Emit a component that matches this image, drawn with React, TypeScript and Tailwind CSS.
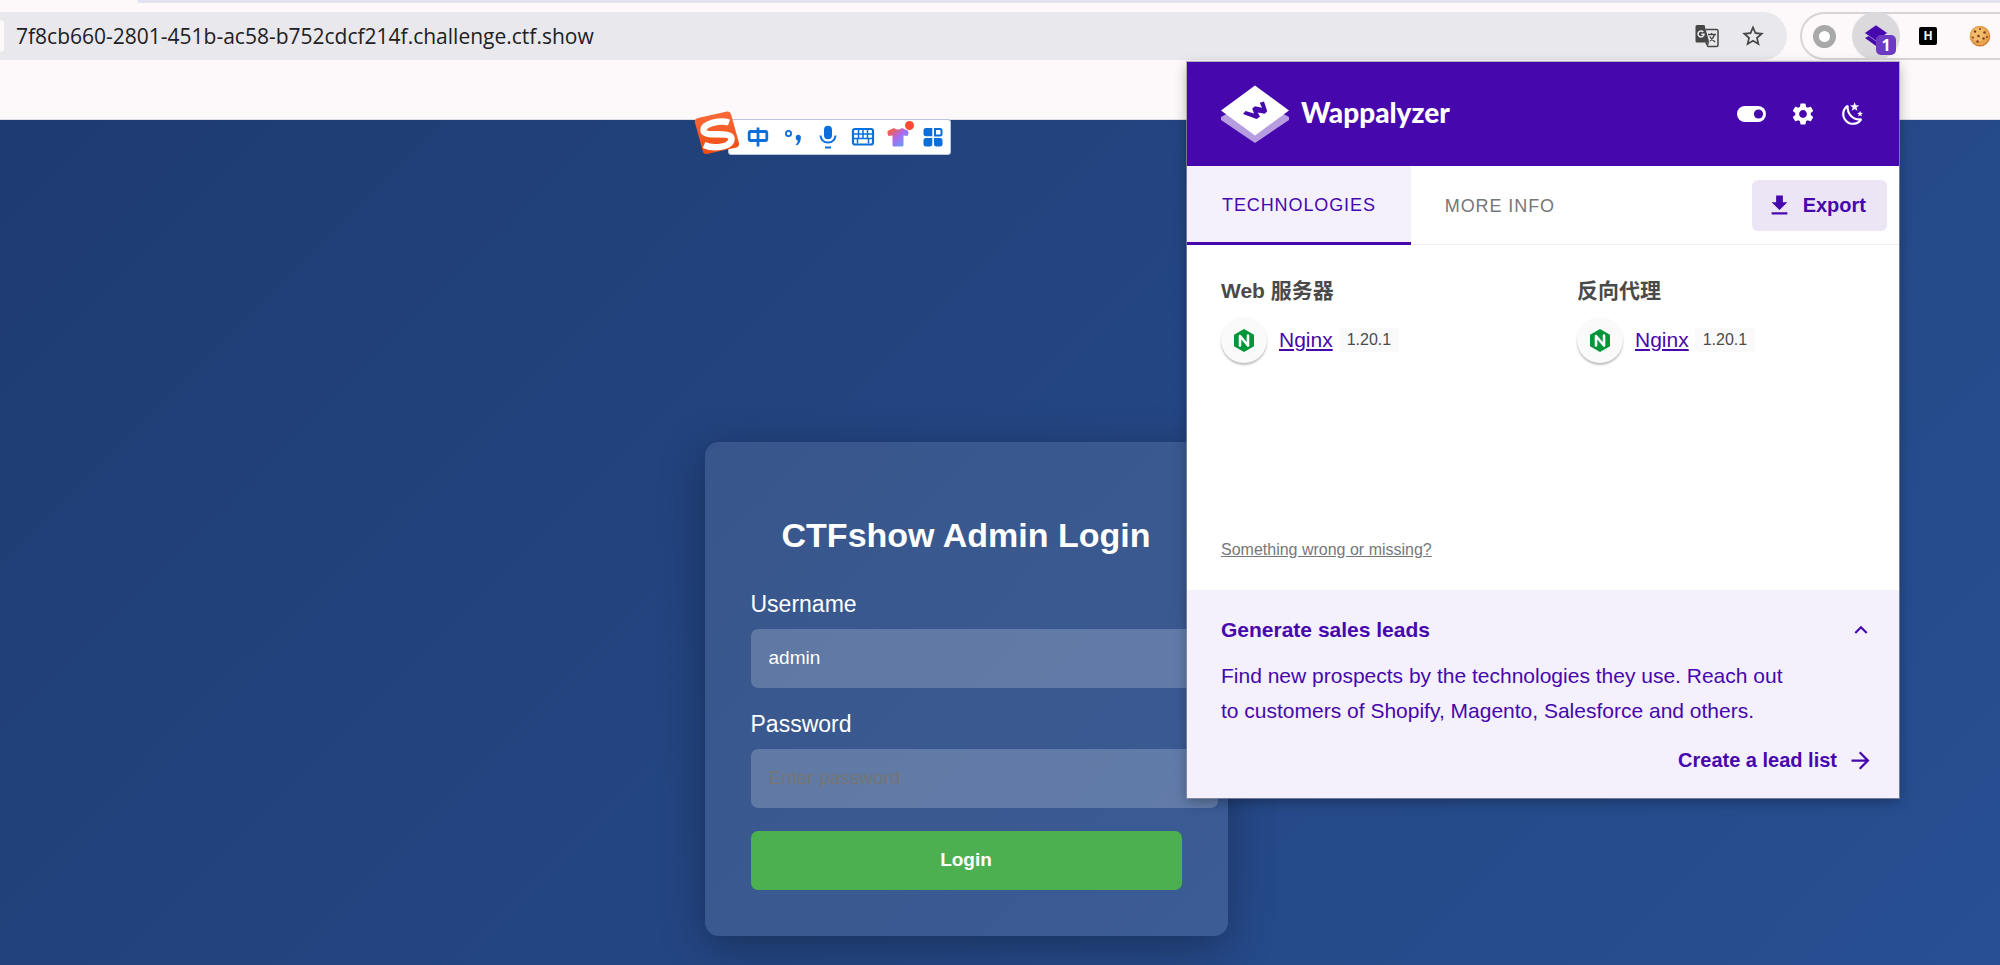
import React from "react";
import { MdArrowForward, MdDownload, MdKeyboardArrowUp, MdSettings, MdStarBorder } from "react-icons/md";

function TranslateIcon() {
  return (
    <svg viewBox="0 0 24 24" className="size-6" fill="none">
      <path d="M11 5.500h10.500a1.500 1.500 0 0 1 1.500 1.500v14a1.500 1.500 0 0 1-1.500 1.500H13l-2-4" stroke="#474747" strokeWidth="1.500" />
      <path d="M2 1h7.500l4.800 17.500H2A1.500 1.500 0 0 1 .5 17V2.500A1.500 1.500 0 0 1 2 1z" fill="#474747" />
      <path d="M8.300 8A3 3 0 1 0 9 10.200H6.300" stroke="#e9e8ed" strokeWidth="1.500" />
      <path d="M13 10.500h8M16.500 9v1.500M19.500 10.500c-.6 3-2.500 5-4.500 6.500M14.800 12.500c1 2 3 4 5.400 5.500" stroke="#474747" strokeWidth="1.300" />
      <path d="M10 18.500h4.300L12.500 22z" fill="#474747" />
    </svg>
  );
}

function Cookie() {
  return (
    <svg viewBox="0 0 24 24" className="size-6">
      <circle cx="12" cy="12.200" r="10.200" fill="#c97a30" />
      <circle cx="11.600" cy="11.600" r="9.600" fill="#e9a24d" />
      <circle cx="10.500" cy="10.500" r="7" fill="#f3bb6c" />
      <g fill="#7b3f1c">
        <circle cx="7" cy="7.500" r="1.200" />
        <circle cx="12" cy="5" r="1" />
        <circle cx="16.500" cy="8.500" r="1.300" />
        <circle cx="10.500" cy="12" r="1.300" />
        <circle cx="5" cy="13.500" r="1" />
        <circle cx="15.500" cy="14.500" r="1.200" />
        <circle cx="9.500" cy="17.500" r="1.200" />
        <circle cx="19" cy="13" r=".9" />
      </g>
    </svg>
  );
}

function BrowserBar() {
  return (
    <header className="h-[120px] border-b border-[#dcdce4] bg-[#fdf8f9]">
      <div className="ml-[137px] h-[3px] rounded-bl-lg bg-[#e4e2f0]" />
      <div className="flex items-center gap-[13px] pt-[9px]">
        <div className="flex h-12 min-w-0 flex-1 items-center rounded-r-full bg-[#e9e8ed] pr-[21px]">
          <span className="h-8 w-1 rounded-r-full bg-[#fdf8f9]" />
          <input
            aria-label="Address"
            readOnly
            value="7f8cb660-2801-451b-ac58-b752cdcf214f.challenge.ctf.show"
            className="h-12 min-w-0 flex-1 bg-transparent pb-px pl-3 font-['Open_Sans',sans-serif] text-[21px] text-[#202124] outline-none"
          />
          <div className="flex items-center gap-[21px] text-[#474747]">
            <button aria-label="Translate">
              <TranslateIcon />
            </button>
            <button aria-label="Bookmark">
              <MdStarBorder className="size-[26px]" />
            </button>
          </div>
        </div>
        <div className="flex h-12 w-[200px] items-center rounded-l-full border-2 border-r-0 border-[#d6d4d8] pl-[11px]">
          <button
            aria-label="Recorder"
            className="mr-4 size-[23px] rounded-full border-[6px] border-[#a9a9a9] bg-white"
          />
          <button
            aria-label="Wappalyzer"
            className="relative flex size-12 items-center justify-center rounded-full bg-[#dbd9dc]"
          >
            <svg viewBox="0 0 24 24" className="size-6" fill="#4608ad">
              <path d="M12 8 23 14 12 22 1 14z" />
              <path d="M12 1 23.500 9 12 17 .5 9z" stroke="#dbd9dc" strokeWidth=".6" />
            </svg>
            <span className="absolute top-[23px] left-6 flex size-5 items-center justify-center rounded-[5px] bg-[#6c3bc1] font-['Open_Sans',sans-serif] text-base font-bold text-white">
              1
            </span>
          </button>
          <button
            aria-label="H extension"
            className="ml-[19px] flex size-[18px] items-center justify-center rounded-[2px] bg-black text-xs font-bold text-white"
          >
            H
          </button>
          <button aria-label="Cookies" className="ml-[31px]">
            <Cookie />
          </button>
        </div>
      </div>
    </header>
  );
}

function InputMethodBar() {
  return (
    <div className="absolute top-[111px] left-[694px] flex items-start">
      <svg viewBox="0 0 46 46" className="z-10 size-[46px]">
        <defs>
          <linearGradient id="sogou" x1="0" y1="0" x2="0" y2="1">
            <stop offset="0" stopColor="#fb6a3a" />
            <stop offset="1" stopColor="#ee4d12" />
          </linearGradient>
        </defs>
        <path d="M4 7 33 .6q3-.6 4 2.400l8 29q.6 3-2.500 4.500L13 43q-3 .5-4-2L.8 11Q.4 8 4 7z" fill="url(#sogou)" />
        <path d="M35 11.500C27 9 9 12 9.500 19.500c.8 7.500 27.500 0 28 8C38 36 20 38.500 10 34" fill="none" stroke="#fff" strokeWidth="6.500" />
      </svg>
      <div className="mt-2 -ml-3 flex h-9 items-center gap-[11px] rounded-[3px] border border-[#b9c6dd] bg-white pr-[5px] pl-[17px] text-[#0a6fdb]">
        <button aria-label="Chinese mode">
          <svg viewBox="0 0 24 24" className="size-6" fill="none" stroke="currentColor" strokeWidth="2.800">
            <rect x="3.200" y="6.500" width="17.600" height="9" rx="1.500" />
            <path d="M12 2.500v19" />
          </svg>
        </button>
        <button aria-label="Punctuation">
          <svg viewBox="0 0 24 24" className="size-6" fill="none">
            <circle cx="7.500" cy="8.500" r="2.600" stroke="currentColor" strokeWidth="1.800" />
            <path d="M14.800 13a2.600 2.600 0 1 1 5 0c0 3.500-1.600 6-4 7.500l-1-1c1.500-1.200 2-2.500 2-3.900-1.200-.1-2-1.200-2-2.600z" fill="currentColor" />
          </svg>
        </button>
        <button aria-label="Voice input">
          <svg viewBox="0 0 24 24" className="size-6" fill="none" stroke="currentColor" strokeWidth="2">
            <rect x="8" y=".8" width="8" height="13.500" rx="4" fill="currentColor" stroke="none" />
            <path d="M4.500 10.500c.5 4.500 3.500 7 7.500 7s7-2.500 7.500-7M9 22.500h6" />
          </svg>
        </button>
        <button aria-label="Keyboard">
          <svg viewBox="0 0 24 24" className="size-6" fill="none" stroke="currentColor">
            <rect x="2" y="4" width="20" height="15.500" rx="2" strokeWidth="2.200" />
            <path d="M3 9h18M3 13.500h18M7.500 4v9.500M12 4v9.500M16.500 4v9.500M6.500 13.500v5M17.500 13.500v5" strokeWidth="1.500" />
          </svg>
        </button>
        <button aria-label="Skins" className="relative">
          <svg viewBox="0 0 24 24" className="size-6">
            <defs>
              <linearGradient id="skin" x1="0" y1="0" x2="1" y2="1">
                <stop offset=".1" stopColor="#ff5a3c" />
                <stop offset=".5" stopColor="#a86bf2" />
                <stop offset="1" stopColor="#4fb2ff" />
              </linearGradient>
            </defs>
            <path d="M8 3q4 3 8 0l5.500 2.500q1.500 1 1 3l-1 2.500-4-.5V20q0 1.500-1.500 1.500H8q-1.500 0-1.500-1.500v-9.500l-4 .5-1-2.500q-.5-2 1-3z" fill="url(#skin)" />
          </svg>
          <span className="absolute -top-1 -right-1 size-[9px] rounded-full bg-[#ff4b33]" />
        </button>
        <button aria-label="Toolbox">
          <svg viewBox="0 0 24 24" className="size-6" fill="currentColor">
            <path d="M5 3h6.300v8.300H5a2.500 2.500 0 0 1-2.500-2.500V5.500A2.500 2.500 0 0 1 5 3z" />
            <path d="M5 13h6.300v6a2.500 2.500 0 0 1-2.500 2.500H5A2.500 2.500 0 0 1 2.500 19v-3.500A2.500 2.500 0 0 1 5 13z" />
            <path d="M13 13h6a2.500 2.500 0 0 1 2.500 2.500V19a2.500 2.500 0 0 1-2.500 2.500h-3.500A2.500 2.500 0 0 1 13 19z" />
            <path d="M14 4h5q1.500 0 1.500 1.500V9q0 1.500-1.500 1.500h-5z" fill="none" stroke="currentColor" strokeWidth="2" />
          </svg>
        </button>
      </div>
    </div>
  );
}

function LoginCard() {
  return (
    <form
      onSubmit={(e) => e.preventDefault()}
      className="w-[523px] self-start rounded-[14px] bg-white/10 px-[46px] pt-[73px] pb-[46px] text-white shadow-[0_12px_46px_rgba(0,0,0,0.3)]"
    >
      <h2 className="mb-9 text-center text-[34px] leading-10 font-bold">CTFshow Admin Login</h2>
      <div className="mb-[23px]">
        <label htmlFor="username" className="mb-3 block text-[23px] leading-[26px]">
          Username
        </label>
        <input
          id="username"
          type="text"
          defaultValue="admin"
          className="box-content h-[23px] w-full rounded-[7px] bg-white/20 px-[18px] py-[18px] text-[19px] outline-none"
        />
      </div>
      <div className="mb-[23px]">
        <label htmlFor="password" className="mb-3 block text-[23px] leading-[26px]">
          Password
        </label>
        <input
          id="password"
          type="password"
          placeholder="Enter password"
          className="box-content h-[23px] w-full rounded-[7px] bg-white/20 px-[18px] py-[18px] text-[19px] outline-none placeholder:text-[#757575]"
        />
      </div>
      <button type="submit" className="h-[59px] w-full rounded-[7px] bg-[#4caf50] text-[19px] font-bold">
        Login
      </button>
    </form>
  );
}

function WappalyzerLogo() {
  return (
    <svg viewBox="0 0 68 58" className="h-[58px] w-[68px]">
      <path d="M0 32 34 13 68 32v3L34 58 0 35z" fill="#b59ddf" />
      <path d="M0 25.500 34 .5 68 25.500 34 50.500z" fill="#fff" />
      <path d="M24.500 26 22 29l13.500 5 3.500-2.200-2.200-4.300 7 1.300 2.400-2.600L43 16.500l-4.200 1.300 2.200 5-7-1.600-2.800 2.200 1.800 5z" fill="#4608ad" />
    </svg>
  );
}

function NginxIcon() {
  return (
    <span className="flex size-[46px] items-center justify-center rounded-full bg-[#fafafa] shadow-[0_2px_2px_rgba(0,0,0,0.25)]">
      <svg viewBox="0 0 20 23" className="h-[23px] w-5">
        <path d="M10 0 20 5.700v11.600L10 23 0 17.300V5.700z" fill="#009639" />
        <path d="M6 16.500V7l8 9.500V6.500" fill="none" stroke="#fff" strokeWidth="2.600" strokeLinecap="round" strokeLinejoin="round" />
      </svg>
    </span>
  );
}

function Technology({ category }: { category: string }) {
  return (
    <section className="flex-1">
      <h3 className="text-[21px] leading-7 font-bold text-[#4a4a4a]">{category}</h3>
      <div className="mt-3 flex items-center">
        <NginxIcon />
        <a href="#nginx" className="ml-3 text-[21px] leading-7 text-[#4608ad] underline underline-offset-2">
          Nginx
        </a>
        <span className="ml-[6px] rounded-[4px] bg-[#fafafa] px-2 text-base leading-6 text-[#4a4a4a]">1.20.1</span>
      </div>
    </section>
  );
}

function WappalyzerPopup() {
  return (
    <aside className="absolute top-[62px] right-[101px] w-[712px] bg-white text-[#4608ad] shadow-[0_0_0_1px_rgba(150,150,170,0.7),0_4px_12px_rgba(0,0,0,0.3)]">
      <div className="flex h-[104px] items-center bg-[#4608ad] pr-[33px] pl-[34px] text-white">
        <WappalyzerLogo />
        <span className="ml-3 flex-1 pb-1 font-['Lato',sans-serif] text-[28px] leading-9 font-black">Wappalyzer</span>
        <div className="flex items-center gap-6">
          <button aria-label="Toggle Wappalyzer">
            <svg viewBox="0 0 29 16" className="h-4 w-[29px]">
              <rect width="29" height="16" rx="8" fill="#fff" />
              <circle cx="21.500" cy="8" r="4.600" fill="#4608ad" />
            </svg>
          </button>
          <button aria-label="Settings">
            <MdSettings className="size-[26px]" />
          </button>
          <button aria-label="Dark mode">
            <svg viewBox="0 0 24 24" className="size-[26px]" fill="currentColor">
              <path d="M17.750 4.090 15.220 6.030l.91 3.060-2.630-1.810-2.630 1.810.91-3.060-2.530-1.940L12.440 4l1.060-3 1.060 3 3.190.09m3.500 6.910-1.640 1.250.59 1.980-1.700-1.170-1.700 1.170.59-1.980L15.750 11l2.060-.05L18.500 9l.69 1.950 2.060.05m-2.280 4.950c.83-.08 1.720 1.100 1.190 1.850-.32.45-.66.87-1.080 1.270-3.910 3.930-10.240 3.930-14.140 0-3.910-3.900-3.910-10.240 0-14.140.4-.4.82-.76 1.270-1.080.75-.53 1.930.36 1.850 1.190-.27 2.860.69 5.830 2.890 8.020 2.190 2.200 5.150 3.160 8.020 2.890m-1.640 2.020c-2.830-.16-5.630-1.330-7.800-3.470-2.170-2.190-3.330-5-3.490-7.820-2.810 3.140-2.700 7.960.31 10.980 3.020 3.010 7.840 3.120 10.980.31z" />
            </svg>
          </button>
        </div>
      </div>
      <div className="flex h-[79px] items-stretch border-b border-[#f0f0f0] pr-3 text-[18px]">
        <button className="-mb-px border-b-[3px] border-[#4608ad] bg-[#f4f0fc] px-[35px] pt-[3px] tracking-wider">
          TECHNOLOGIES
        </button>
        <button className="px-[34px] pt-[3px] tracking-wider text-[#777777]">MORE INFO</button>
        <button className="ml-auto flex h-[51px] items-center gap-[10px] self-center rounded-[6px] bg-[#ece5f6] pr-[21px] pl-[14px] text-[20px] font-bold">
          <MdDownload className="size-[27px]" />
          Export
        </button>
      </div>
      <div className="flex min-h-[345px] flex-col px-[34px] pt-8 pb-7">
        <div className="-mr-[68px] flex">
          <Technology category="Web 服务器" />
          <Technology category="反向代理" />
        </div>
        <a href="#report" className="mt-auto self-start text-base leading-6 text-[#777777] underline">
          Something wrong or missing?
        </a>
      </div>
      <div className="bg-[#f4f0fc] pt-[26px] pr-[25px] pb-[24px] pl-[34px] text-[21px]">
        <div className="flex h-7 items-center justify-between">
          <h3 className="font-bold">Generate sales leads</h3>
          <button aria-label="Collapse">
            <MdKeyboardArrowUp className="size-[26px]" />
          </button>
        </div>
        <p className="mt-[14px] mb-[18px] w-[570px] leading-[35px]">
          Find new prospects by the technologies they use. Reach out to customers of Shopify, Magento, Salesforce and
          others.
        </p>
        <a href="#leads" className="flex h-7 items-center justify-end gap-[10px] text-[20px] font-bold">
          Create a lead list
          <MdArrowForward className="size-[27px]" />
        </a>
      </div>
    </aside>
  );
}

export default function App() {
  return (
    <div className="relative overflow-hidden font-['Liberation_Sans','Noto_Sans_CJK_SC',sans-serif]">
      <BrowserBar />
      <main className="flex min-h-[845px] justify-center bg-linear-135 from-[#1e3c72] to-[#2a5298] to-115% pt-[322px] pr-[68px]">
        <LoginCard />
      </main>
      <InputMethodBar />
      <WappalyzerPopup />
    </div>
  );
}
